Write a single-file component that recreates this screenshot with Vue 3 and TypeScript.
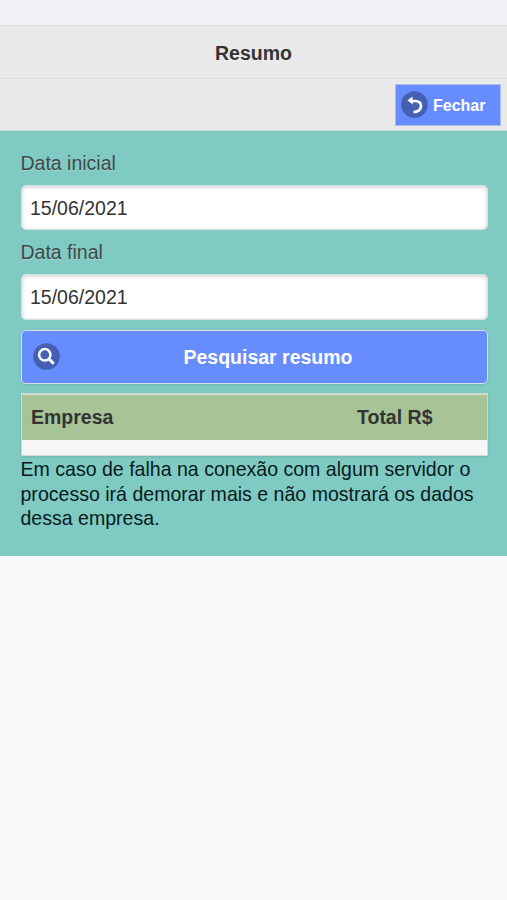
<script setup lang="ts">
import { ref } from 'vue'

interface DateField {
  id: string
  label: string
  value: string
}

const fields = ref<DateField[]>([
  { id: 'inicio', label: 'Data inicial', value: '15/06/2021' },
  { id: 'fim', label: 'Data final', value: '15/06/2021' },
])
</script>

<template>
  <div class="page">
    <div class="status"></div>
    <header class="title-bar"><h1>Resumo</h1></header>
    <nav class="tool-bar">
      <button class="close" type="button">
        <svg class="icon" viewBox="0 0 27 27">
          <circle cx="13.5" cy="13.5" r="13.3" fill="#4560b3" />
          <path d="M9.5 10H13.8C18 10 20 12.2 20 15.1C20 18.6 17 20.9 12.6 21.2" fill="none" stroke="#fff" stroke-width="2.7" />
          <path d="M6.4 9.6L11.4 5.4L12 13.6Z" fill="#fff" />
        </svg>
        <span>Fechar</span>
      </button>
    </nav>
    <main class="content">
      <div v-for="field in fields" :key="field.id" class="field">
        <label :for="field.id">{{ field.label }}</label>
        <input :id="field.id" v-model="field.value" type="text" />
      </div>
      <button class="search" type="button">
        <svg class="icon" viewBox="0 0 27 27">
          <circle cx="13.5" cy="13.5" r="13.3" fill="#4560b3" />
          <circle cx="11.8" cy="11.8" r="5.7" fill="none" stroke="#fff" stroke-width="2.5" />
          <path d="M15.9 15.9L20.8 20.8" stroke="#fff" stroke-width="3" />
        </svg>
        <span>Pesquisar resumo</span>
      </button>
      <section class="table">
        <div class="table-head"><span>Empresa</span><span>Total R$</span></div>
        <div class="table-body"></div>
      </section>
      <p>Em caso de falha na conexão com algum servidor o processo irá demorar mais e não mostrará os dados dessa empresa.</p>
    </main>
  </div>
</template>

<style>
body {
  background: #f9f9f9;
}
</style>

<style scoped>
.page {
  min-height: 900px;
  font: 19.5px/24.5px "Liberation Sans", Arial, sans-serif;
  color: #333;
  background: #f9f9f9;
}
.page * {
  box-sizing: border-box;
}
.status {
  height: 25px;
  background: #f0f0f6;
}
.title-bar {
  height: 54px;
  display: flex;
  align-items: center;
  justify-content: center;
  padding-top: 1px;
  background: #e9e9e9;
  border-top: 1px solid #e0e0e0;
  border-bottom: 1px solid #dddddd;
}
h1 {
  margin: 0;
  font-size: 19.5px;
  line-height: 24px;
  text-shadow: 0 1px 0 #eee;
}
.tool-bar {
  height: 51.5px;
  display: flex;
  justify-content: flex-end;
  align-items: flex-start;
  padding: 5px 6px 0 0;
  background: #e9e9e9;
  border-bottom: 1px solid #d0dbd9;
}
button {
  display: flex;
  align-items: center;
  margin: 0;
  font-family: inherit;
  font-weight: bold;
  color: #fff;
  background: #668cff;
}
.icon {
  display: block;
  flex: none;
  width: 27px;
  height: 27px;
}
.close {
  width: 106px;
  height: 42px;
  gap: 5px;
  padding: 0 0 1px 5px;
  font-size: 16px;
  border: 1px solid #a9bbf0;
}
.close span {
  padding-top: 2px;
}
.content {
  height: 425.5px;
  padding: 20px 19.5px 0 20.5px;
  background: #7fcbc3;
}
.field {
  height: 89.5px;
}
label {
  display: block;
  height: 34px;
  color: #3d4a49;
  text-shadow: 0 1px 0 #a9d3cd;
}
input {
  display: block;
  width: 100%;
  height: 45.5px;
  margin: 0;
  padding: 2px 8.5px 0;
  font: inherit;
  color: #333;
  background: #fff;
  border: 1px solid #d3e3df;
  border-radius: 5px;
  outline: none;
  box-shadow: inset 0 1px 4px rgba(0, 0, 0, 0.2);
}
.search {
  width: 100%;
  height: 54px;
  padding: 0 11px;
  font-size: 19.5px;
  border: 1px solid #d5dff0;
  border-radius: 5px;
  box-shadow: 0 1px 3px rgba(0, 0, 0, 0.12);
}
.search span {
  flex: 1;
  padding: 2px 0 0 1px;
  text-align: center;
}
.table {
  height: 63px;
  margin-top: 9.5px;
  border: 1px solid #cfdccb;
  border-width: 2px 1px 1px;
  box-shadow: 0 1px 3px rgba(0, 0, 0, 0.12);
}
.table-head {
  display: grid;
  grid-template-columns: 326px 1fr;
  align-items: center;
  height: 45px;
  padding: 0 0 1px 9.5px;
  font-weight: bold;
  background: #a7c497;
}
.table-body {
  height: 15px;
  background: #f6f6f6;
}
p {
  margin: 1px -10px 0 0;
  font-size: 19.56px;
  color: #071a1c;
}
</style>
